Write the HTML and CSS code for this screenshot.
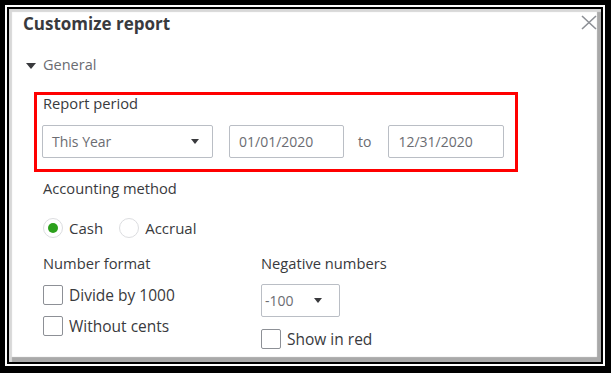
FILE: index.html
```html
<!DOCTYPE html>
<html lang="en">
<head>
  <meta charset="UTF-8">
  <title>Customize report</title>
  <link rel="stylesheet" href="styles.css">
</head>
<body>
  <div class="frame">
    <div class="frame-inner">
      <div class="panel">
        <div class="header">
          <h2>Customize report</h2>
          <svg class="close" width="16" height="15" viewBox="0 0 16 15">
            <path d="M1 1 L15 14 M15 1 L1 14" stroke="#8d9096" stroke-width="1.6" fill="none"/>
          </svg>
        </div>

        <div class="section-toggle">
          <span class="toggle-caret"></span>
          <span>General</span>
        </div>

        <div class="period-box">
          <div class="period-label">Report period</div>
          <div class="period-row">
            <div class="select period-select">
              <span>This Year</span>
              <span class="caret"></span>
            </div>
            <div class="date-input date-from">01/01/2020</div>
            <span class="to">to</span>
            <div class="date-input date-to">12/31/2020</div>
          </div>
        </div>

        <div class="options">
          <div class="label">Accounting method</div>
          <div class="radio-row">
            <label class="radio"><span class="radio-dot checked"></span>Cash</label>
            <label class="radio"><span class="radio-dot"></span>Accrual</label>
          </div>

          <div class="columns">
            <div class="col col-left">
              <div class="label">Number format</div>
              <label class="check check-first"><span class="box"></span>Divide by 1000</label>
              <label class="check check-second"><span class="box"></span>Without cents</label>
            </div>
            <div class="col">
              <div class="label">Negative numbers</div>
              <div class="select neg-select">
                <span>-100</span>
                <span class="caret"></span>
              </div>
              <label class="check check-red"><span class="box"></span>Show in red</label>
            </div>
          </div>
        </div>
      </div>
    </div>
  </div>
</body>
</html>
```

FILE: styles.css
```css
html, body {
  margin: 0;
  background: #000;
}
body {
  font-family: "Open Sans", Arial, sans-serif;
  color: #393a3d;
  padding: 5px 6px 7px 5px;
  height: 373px;
  box-sizing: border-box;
}
.frame {
  height: 100%;
  box-sizing: border-box;
  border: 2px solid #fff;
}
.frame-inner {
  height: 100%;
  box-sizing: border-box;
  border: 2px solid #000;
}
.panel {
  height: 100%;
  box-sizing: border-box;
  background: #fff;
  padding: 3px 4px 0 14px;
  box-shadow: inset 3px 3px 1px #d8d8d8, inset -5px -6px 1px -1px #a9a9a9;
}
.header {
  display: flex;
  justify-content: space-between;
  align-items: flex-start;
}
h2 {
  margin: 0;
  font-size: 17px;
  font-weight: 700;
  line-height: 24px;
  color: #393a3d;
}
.close {
  margin-top: 3px;
}
.section-toggle {
  display: flex;
  align-items: center;
  margin-top: 19px;
  font-size: 14.5px;
  line-height: 20px;
  color: #6b6c72;
}
.toggle-caret {
  width: 0;
  height: 0;
  border-left: 5px solid transparent;
  border-right: 5px solid transparent;
  border-top: 6px solid #393a3d;
  margin: 1px 7px 0 3px;
}
.period-box {
  margin: 17px 0 0 11px;
  width: 484px;
  box-sizing: border-box;
  border: 3px solid #f00;
  padding: 0 0 11px 5px;
}
.period-label {
  font-size: 14.7px;
  line-height: 17px;
  padding-left: 1px;
}
.period-row {
  display: flex;
  align-items: center;
  margin-top: 13px;
}
.select, .date-input {
  height: 33px;
  box-sizing: border-box;
  border: 1px solid #babec5;
  border-radius: 2px;
  display: flex;
  align-items: center;
  font-size: 14px;
  color: #6b6c72;
}
.select {
  justify-content: space-between;
}
.period-select {
  width: 171px;
  padding: 0 13px 0 9px;
}
.caret {
  width: 0;
  height: 0;
  border-left: 4.5px solid transparent;
  border-right: 4.5px solid transparent;
  border-top: 5px solid #393a3d;
}
.date-input {
  padding-left: 9px;
}
.date-from {
  width: 115px;
  margin-left: 16px;
}
.date-to {
  width: 116px;
}
.to {
  font-size: 14px;
  color: #6b6c72;
  margin: 0 17px 0 14px;
}
.options {
  padding-left: 20px;
  margin-top: 6px;
}
.label {
  font-size: 14.7px;
  line-height: 20px;
}
.radio-row {
  display: flex;
  margin-top: 20px;
  gap: 16px;
}
.radio, .check {
  display: flex;
  align-items: center;
  font-size: 15px;
  line-height: 20px;
}
.check {
  font-size: 15.5px;
}
.radio-dot {
  width: 20px;
  height: 20px;
  box-sizing: border-box;
  border: 1px solid #dcdde0;
  border-radius: 50%;
  margin-right: 6px;
  display: flex;
  align-items: center;
  justify-content: center;
}
.radio-dot.checked::after {
  content: "";
  width: 10px;
  height: 10px;
  border-radius: 50%;
  background: #2ca01c;
}
.columns {
  display: flex;
  margin-top: 15px;
}
.col-left {
  width: 218px;
}
.box {
  width: 20px;
  height: 20px;
  box-sizing: border-box;
  border: 1px solid #8d9096;
  border-radius: 2px;
  margin-right: 6px;
}
.check-first {
  margin-top: 12px;
}
.check-second {
  margin-top: 11px;
}
.neg-select {
  width: 79px;
  margin-top: 11px;
  padding: 0 17px 0 3px;
}
.check-red {
  margin-top: 12px;
}
```
